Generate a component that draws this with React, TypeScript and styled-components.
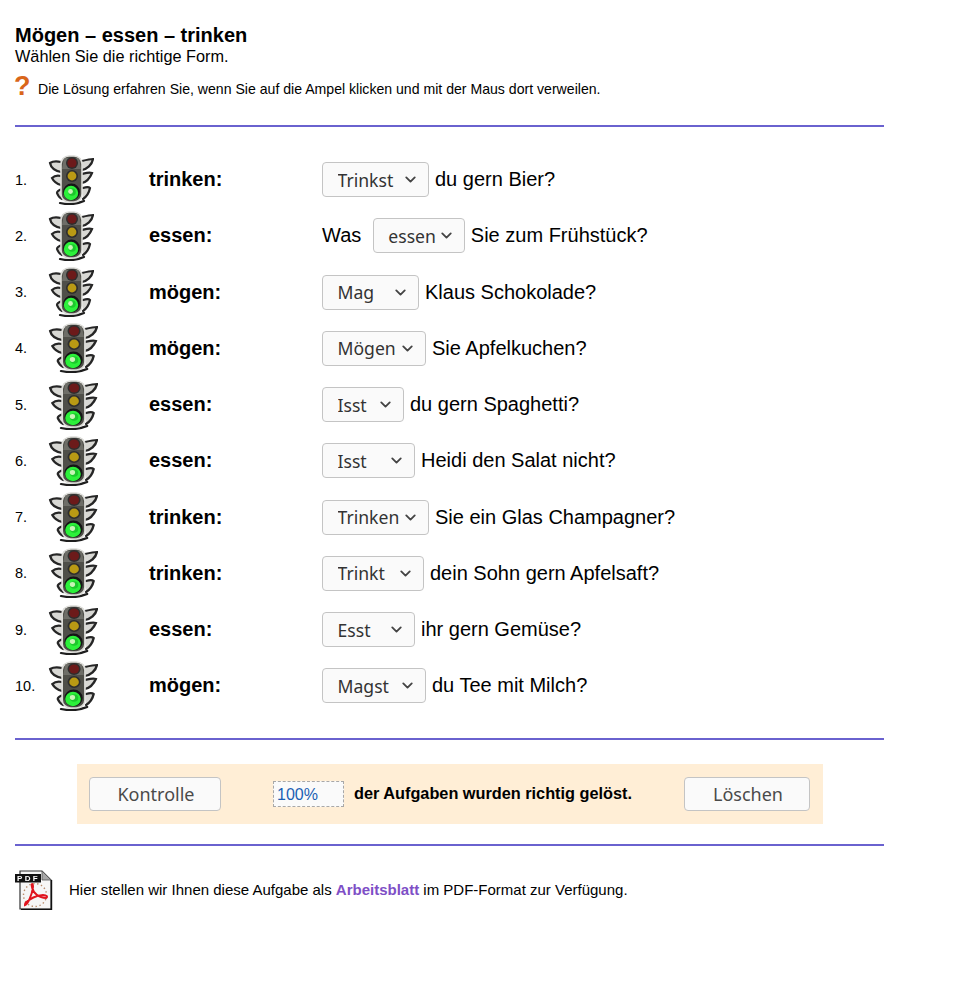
import styled, { createGlobalStyle } from 'styled-components';
import { ChevronDown } from 'lucide-react';

const GlobalStyle = createGlobalStyle`
  body {
    margin: 0;
    background: #ffffff;
    color: #000000;
    font-family: "Liberation Sans", Arial, sans-serif;
  }
`
const Page = styled.div`
  width: 869px;
  height: 969px;
  padding: 25px 0 0 15px;
  overflow: hidden;
`
const Title = styled.h1`
  margin: 0;
  font-size: 20px;
  line-height: 21px;
  font-weight: 700;
`
const Sub = styled.p`
  margin: 1px 0 0;
  font-size: 16.3px;
  line-height: 19px;
`
const Hint = styled.div`
  display: flex;
  align-items: flex-start;
  height: 54px;
  margin-top: 5px;
  font-size: 14.1px;
`
const HintMark = styled.span`
  width: 23px;
  margin-left: -1px;
  font-size: 27px;
  line-height: 31px;
  font-weight: 700;
  color: #d9661a;
`
const HintText = styled.span`
  padding-top: 9px;
  margin-left: 1px;
  line-height: 18px;
`
const Rule = styled.hr`
  margin: 0;
  border: none;
  height: 2px;
  background: #6a62cf;
`
const Rows = styled.div`
  padding: 24.4px 0 24.1px;
`
const Row = styled.div`
  display: grid;
  grid-template-columns: 33px 101px 173px 1fr;
  align-items: center;
  height: 56.25px;
`
const Num = styled.span`
  font-size: 14.5px;
`
const Term = styled.span`
  font-size: 20px;
  font-weight: 700;
`
const Sentence = styled.div`
  display: flex;
  align-items: center;
  gap: 6px;
  font-size: 20px;
  white-space: pre;
`
const SelectWrap = styled.label<{ $w: number }>`
  position: relative;
  display: block;
  width: ${(p) => p.$w}px;
  height: 35px;
  svg {
    position: absolute;
    right: 10px;
    top: 9px;
    color: #444444;
    pointer-events: none;
  }
`
const Select = styled.select`
  appearance: none;
  width: 100%;
  height: 100%;
  padding: 0 0 0 14.5px;
  border: 1px solid #c4c4c4;
  border-radius: 4px;
  background: #fafafa;
  font-family: "Noto Sans", sans-serif;
  font-size: 17.6px;
  color: #333333;
`
const Panel = styled.div`
  display: flex;
  align-items: center;
  width: 746px;
  height: 60px;
  margin: 24px 0 20px 62px;
  padding: 0 13px 0 12px;
  box-sizing: border-box;
  background: #ffeed6;
`
const Button = styled.button<{ $w: number }>`
  width: ${(p) => p.$w}px;
  height: 34px;
  padding: 0 0 0 2px;
  border: 1px solid #c4c4c4;
  border-radius: 4px;
  background: #fafafa;
  font-family: "Noto Sans", sans-serif;
  font-size: 18px;
  color: #4a4a4a;
`
const Score = styled.output`
  display: block;
  width: 71px;
  height: 26px;
  margin-left: 52px;
  padding-left: 3px;
  box-sizing: border-box;
  border: 1px dashed #a8a8a8;
  background: #fafafa;
  font-size: 16px;
  line-height: 25px;
  color: #1a5fb4;
`
const ScoreLabel = styled.span`
  flex: 1;
  margin-left: 10px;
  font-size: 16.3px;
  font-weight: 700;
`
const Worksheet = styled.div`
  display: flex;
  align-items: flex-start;
  margin-top: 24px;
  font-size: 15px;
`
const WorksheetText = styled.p`
  margin: 11px 0 0 16px;
  line-height: 18px;
`
const SheetLink = styled.a`
  font-weight: 700;
  color: #7e4fc6;
  text-decoration: none;
`
const LightSvg = styled.svg`
  filter: blur(0.6px);
`
const PdfSvg = styled.svg`
  filter: blur(0.3px);
`

function TrafficLight({ wide }: { wide: boolean }) {
  return (
    <LightSvg width={wide ? 50 : 46} height="50" viewBox="0 0 46 50" preserveAspectRatio="none">
      <g fill="#d8d8d4" stroke="#262626" strokeWidth="2.2" strokeLinecap="round">
        <path d="M13 7 C9 6 5 6 2 8 C3 13 8 16 13 17" />
        <path d="M13 21 C9 20 6 21 4 23 C6 27 9 29 13 30" />
        <path d="M14 34 C11 35 9 36 9 38 C10 41 12 43 14 44" />
        <path d="M34 6 C38 5 42 4 45 4 C44 10 39 14 34 15" />
        <path d="M34 19 C38 18 41 17 44 18 C42 23 38 27 34 28" />
        <path d="M35 33 C38 32 41 32 42 33 C41 38 38 42 35 44" />
      </g>
      <path d="M12 48 C20 50 29 49 36 46" fill="none" stroke="#1e1e1e" strokeWidth="2.2" strokeLinecap="round" />
      <rect x="13" y="1" width="21" height="46" rx="8" fill="#4f4f49" stroke="#dcdcd8" strokeWidth="1.6" />
      <path d="M16 3 H31 L33 14 H14 Z" fill="#7c7c76" opacity="0.7" />
      <circle cx="24" cy="8" r="6" fill="#2e2e2e" />
      <circle cx="24" cy="8" r="4.6" fill="#6c1a1a" />
      <circle cx="24" cy="21" r="6" fill="#2e2e2e" />
      <circle cx="24" cy="21" r="4.4" fill="#b99a14" />
      <circle cx="23.5" cy="37" r="8.4" fill="#151515" />
      <circle cx="23" cy="38" r="7.2" fill="#2cf03a" />
      <circle cx="24" cy="37" r="3.8" fill="#1cc82c" />
      <circle cx="22.5" cy="36.5" r="2.4" fill="#c8f5b6" />
    </LightSvg>
  );
}

function PdfIcon() {
  return (
    <PdfSvg width="38" height="40" viewBox="0 0 38 40">
      <path d="M5 1 H27 L36 10 V39 H5 Z" fill="#f6f6f6" stroke="#333333" strokeWidth="1.2" />
      <path d="M27 1 V10 H36 Z" fill="#a8a8a8" stroke="#555555" strokeWidth="0.8" />
      <path d="M36.5 10 V39.5 H6" fill="none" stroke="#111111" strokeWidth="1.4" />
      <rect x="0" y="4" width="26" height="8.5" fill="#111111" />
      <text x="13.5" y="11.4" textAnchor="middle" fontFamily="Liberation Sans" fontSize="8" fontWeight="700" letterSpacing="2.4" fill="#ffffff">PDF</text>
      <circle cx="20" cy="25" r="11.5" fill="none" stroke="#b98a6a" strokeWidth="1.4" strokeDasharray="1.4 2.6" />
      <path
        d="M10 35 C13 34 17 25 18 17 C18 13 16 13 17 17 C18 23 24 28 31 28 C33 27 32 25 28 25 C22 25 14 29 10.5 33 C10 34 10 35 10 35 Z"
        fill="none"
        stroke="#e0141e"
        strokeWidth="2"
      />
    </PdfSvg>
  );
}

const rows = [
  { term: 'trinken:', before: '', value: 'Trinkst', w: 107, after: 'du gern Bier?' },
  { term: 'essen:', before: 'Was', value: 'essen', w: 92, after: 'Sie zum Frühstück?' },
  { term: 'mögen:', before: '', value: 'Mag', w: 97, after: 'Klaus Schokolade?' },
  { term: 'mögen:', before: '', value: 'Mögen', w: 104, after: 'Sie Apfelkuchen?' },
  { term: 'essen:', before: '', value: 'Isst', w: 82, after: 'du gern Spaghetti?' },
  { term: 'essen:', before: '', value: 'Isst', w: 93, after: 'Heidi den Salat nicht?' },
  { term: 'trinken:', before: '', value: 'Trinken', w: 107, after: 'Sie ein Glas Champagner?' },
  { term: 'trinken:', before: '', value: 'Trinkt', w: 102, after: 'dein Sohn gern Apfelsaft?' },
  { term: 'essen:', before: '', value: 'Esst', w: 93, after: 'ihr gern Gemüse?' },
  { term: 'mögen:', before: '', value: 'Magst', w: 104, after: 'du Tee mit Milch?' },
];

export default function App() {
  return (
    <Page>
      <GlobalStyle />
      <Title>Mögen – essen – trinken</Title>
      <Sub>Wählen Sie die richtige Form.</Sub>
      <Hint>
        <HintMark>?</HintMark>
        <HintText>Die Lösung erfahren Sie, wenn Sie auf die Ampel klicken und mit der Maus dort verweilen.</HintText>
      </Hint>
      <Rule />
      <Rows>
        {rows.map((row, i) => (
          <Row key={i}>
            <Num>{i + 1}.</Num>
            <TrafficLight wide={i > 2} />
            <Term>{row.term}</Term>
            <Sentence>
              {row.before && <span>{row.before} </span>}
              <SelectWrap $w={row.w}>
                <Select defaultValue={row.value}>
                  <option>{row.value}</option>
                </Select>
                <ChevronDown size={17} strokeWidth={2.6} />
              </SelectWrap>
              <span>{row.after}</span>
            </Sentence>
          </Row>
        ))}
      </Rows>
      <Rule />
      <Panel>
        <Button $w={132}>Kontrolle</Button>
        <Score>100%</Score>
        <ScoreLabel>der Aufgaben wurden richtig gelöst.</ScoreLabel>
        <Button $w={126}>Löschen</Button>
      </Panel>
      <Rule />
      <Worksheet>
        <PdfIcon />
        <WorksheetText>
          Hier stellen wir Ihnen diese Aufgabe als <SheetLink href="#">Arbeitsblatt</SheetLink> im PDF-Format zur Verfügung.
        </WorksheetText>
      </Worksheet>
    </Page>
  );
}
